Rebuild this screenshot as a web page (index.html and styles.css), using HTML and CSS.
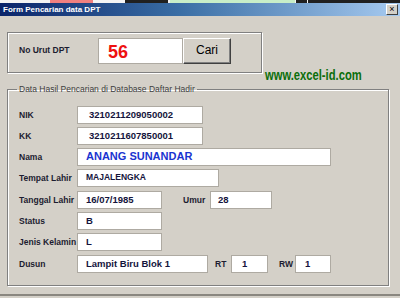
FILE: index.html
```html
<!DOCTYPE html>
<html>
<head>
    <title>Form Pencarian data DPT</title>
    <link rel="stylesheet" href="styles.css">
    <meta charset="UTF-8" />
</head>
<body>
<div class="strip">
    <span class="seg white" style="width:50px"></span>
    <span class="seg red" style="width:43px"></span>
    <span class="seg white" style="width:32px"></span>
    <span class="seg black" style="width:43px"></span>
    <span class="seg white" style="width:2px"></span>
    <span class="seg green" style="width:125px"></span>
    <span class="seg white" style="width:1px"></span>
    <span class="seg black" style="width:11px"></span>
    <span class="seg white" style="width:1px"></span>
    <span class="seg black" style="width:92px"></span>
</div>
<div class="window">
    <div class="titlebar">
        <span class="caption">Form Pencarian data DPT</span>
        <span class="close">&#215;</span>
    </div>
    <div class="client">
        <div class="toprow">
            <div class="frame search">
                <span class="lbl nourut">No Urut DPT</span>
                <div class="box big">56</div>
                <div class="btn">Cari</div>
            </div>
            <div class="site">www.excel-id.com</div>
        </div>
        <fieldset class="frame result">
            <legend>Data Hasil Pencarian di Database Daftar Hadir</legend>
            <div class="rows">
                <div class="row">
                    <span class="lbl">NIK</span>
                    <div class="box nik">3210211209050002</div>
                </div>
                <div class="row">
                    <span class="lbl">KK</span>
                    <div class="box nik">3210211607850001</div>
                </div>
                <div class="row">
                    <span class="lbl">Nama</span>
                    <div class="box nama">ANANG SUNANDAR</div>
                </div>
                <div class="row">
                    <span class="lbl">Tempat Lahir</span>
                    <div class="box tempat">MAJALENGKA</div>
                </div>
                <div class="row">
                    <span class="lbl">Tanggal Lahir</span>
                    <div class="box short">16/07/1985</div>
                    <span class="lbl umur">Umur</span>
                    <div class="box umurbox">28</div>
                </div>
                <div class="row">
                    <span class="lbl">Status</span>
                    <div class="box short">B</div>
                </div>
                <div class="row">
                    <span class="lbl">Jenis Kelamin</span>
                    <div class="box short">L</div>
                </div>
                <div class="row">
                    <span class="lbl">Dusun</span>
                    <div class="box dusun">Lampit Biru Blok 1</div>
                    <span class="lbl rt">RT</span>
                    <div class="box rtbox">1</div>
                    <span class="lbl rw">RW</span>
                    <div class="box rwbox">1</div>
                </div>
            </div>
        </fieldset>
    </div>
</div>
</body>
</html>
```

FILE: styles.css
```css
body {
    margin: 0;
    width: 400px;
    height: 298px;
    overflow: hidden;
    background-color: #d4d0c8;
    font-family: "Liberation Sans", Arial, sans-serif;
}

.strip {
    display: flex;
    height: 3px;
    background-color: #f4f4f4;
}
.seg { display: block; height: 3px; }
.white { background-color: #f4f4f4; }
.red { background-color: #f08080; }
.black { background-color: #202020; }
.green { background-color: #c8eec8; }

.window {
    height: 293px;
    border-bottom: 2px solid #8a8780;
    box-sizing: border-box;
}

.titlebar {
    height: 13px;
    display: flex;
    align-items: center;
    justify-content: space-between;
    background: linear-gradient(to right, #0a246a, #3a6ea5 45%, #a6caf0);
    color: white;
}
.caption {
    font-size: 8px;
    font-weight: bold;
    margin-left: 3px;
}
.close {
    width: 10px;
    height: 9px;
    margin-right: 2px;
    background-color: #d4d0c8;
    border: 1px solid;
    border-color: #fff #404040 #404040 #fff;
    color: #000;
    font-size: 9px;
    line-height: 8px;
    text-align: center;
}

.client {
    padding-top: 16px;
}

.frame {
    border: 1px solid #808080;
    box-shadow: 1px 1px 0 #fff, inset 1px 1px 0 #fff;
}

.toprow {
    display: flex;
    height: 41px;
    align-items: flex-start;
}

.search {
    margin-left: 7px;
    width: 255px;
    height: 41px;
    box-sizing: border-box;
    display: flex;
    align-items: center;
    padding: 5px 0 8px 11px;
}

.lbl {
    font-size: 8.5px;
    font-weight: bold;
    color: #1c1c30;
    white-space: nowrap;
}
.nourut {
    width: 79px;
    margin-top: -2px;
}

.box {
    background-color: white;
    border: 1px solid #aeaaa2;
    box-sizing: border-box;
    height: 18px;
    padding: 2px 0 0 8px;
    font-size: 9.5px;
    font-weight: bold;
    line-height: 11px;
    color: #14143c;
    white-space: nowrap;
}
.big {
    width: 85px;
    height: 26px;
    padding: 3px 0 0 9px;
    font-size: 18px;
    line-height: 20px;
    color: #ee1111;
}
.btn {
    width: 48px;
    height: 26px;
    box-sizing: border-box;
    border: 1px solid;
    border-color: #fff #404040 #404040 #fff;
    box-shadow: inset -1px -1px 0 #808080;
    font-size: 12px;
    line-height: 23px;
    text-align: center;
    color: #000;
}

.site {
    margin: 36px 0 0 3px;
    font-weight: bold;
    font-size: 14px;
    line-height: 14px;
    color: #0b6e0b;
    white-space: nowrap;
    transform: scaleX(0.8);
    transform-origin: left top;
}

.result {
    margin: 11px 0 0 7px;
    width: 382px;
    height: 202px;
    box-sizing: border-box;
    padding: 0 0 0 11px;
}
legend {
    margin-left: -2px;
    padding: 0 2px;
    font-size: 8.5px;
    line-height: 11px;
    color: #404040;
}

.rows {
    display: grid;
    grid-template-rows: 21px 21px 21px 22px 21px 21px 22px 18px;
    padding-top: 11px;
}
.row {
    display: flex;
    align-items: flex-start;
}
.row > .lbl {
    width: 58px;
    line-height: 18px;
}
.nik { width: 126px; padding-left: 11px; }
.nama {
    width: 254px;
    font-size: 11px;
    line-height: 13px;
    padding-top: 1px;
    color: #1a34d0;
}
.tempat { width: 142px; font-size: 8.5px; }
.short { width: 85px; }
.row > .umur { width: 27px; margin-left: 21px; }
.umurbox { width: 62px; padding-left: 7px; }
.dusun { width: 131px; }
.row > .rt { width: 16px; margin-left: 7px; }
.rtbox { width: 37px; padding-left: 10px; }
.row > .rw { width: 16px; margin-left: 11px; }
.rwbox { width: 36px; padding-left: 9px; }
```
